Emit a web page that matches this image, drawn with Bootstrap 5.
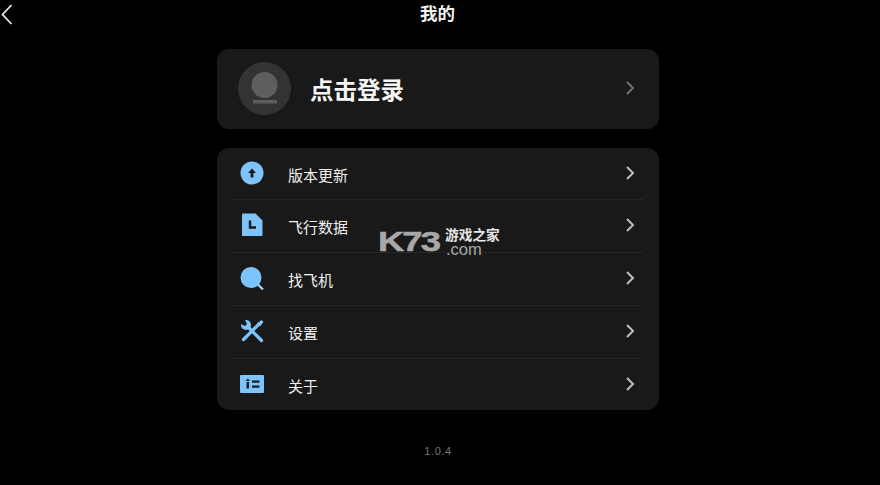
<!DOCTYPE html>
<html lang="zh">
<head>
<meta charset="utf-8">
<title>我的</title>
<link href="https://cdn.jsdelivr.net/npm/bootstrap@5.3.0/dist/css/bootstrap.min.css" rel="stylesheet">
<style>
html,body{height:485px;overflow:hidden;background:#000;}
body{font-family:"Liberation Sans","Noto Sans CJK SC",sans-serif;color:#fff;}
.screen{width:880px;height:485px;position:relative;}
.topbar{height:49px;position:relative;}
.topbar-title{font-size:17.5px;font-weight:700;line-height:28px;color:#f2f2f2;width:875px;}
.back-arrow{position:absolute;left:0;top:2px;}
.column{width:442px;margin-left:217px;}
.panel{background:#191919;border-radius:12px;}
.login-panel{height:80px;padding:0 21px;margin-bottom:19px;}
.avatar-disc{width:53px;height:53px;border-radius:50%;background:#333;flex:none;margin-top:-1px;}
.login-text{font-size:23.5px;font-weight:700;margin-left:19px;line-height:32px;color:#f5f5f5;margin-top:4px;}
.menu-panel{height:262px;padding:0 16px;}
.menu-row{height:53px;border-bottom:1px solid #262626;padding:0 1px 0 7px;}
.menu-row:first-child{height:52px;}
.menu-row:last-child{height:51px;border-bottom:0;}
.icon-slot{width:24px;height:24px;flex:none;margin-top:-2px;}
.menu-text{font-size:15px;margin-left:24px;line-height:20px;color:#f0f0f0;margin-top:4px;}
.chev{flex:none;margin-top:-2px;margin-right:6px;}
.chev-dim{margin-right:2px;}
.version{font-size:11px;letter-spacing:.6px;color:#777;margin-top:34px;line-height:14px;}
.wm{position:absolute;left:378px;top:226px;width:126px;height:30px;color:#fff;}
.wm-k{position:absolute;left:0;top:0;font-size:28px;font-weight:700;line-height:32px;color:#a8a8a8;transform:scaleX(1.3);transform-origin:left center;letter-spacing:-1.5px;-webkit-text-stroke:.5px #a8a8a8;}
.wm-a{position:absolute;left:67px;top:3px;font-size:13.7px;line-height:14px;font-weight:700;color:#e8e8e8;white-space:nowrap;}
.wm-b{position:absolute;left:68px;top:17px;font-size:16.5px;line-height:12px;color:#a8a8a8;white-space:nowrap;}
</style>
</head>
<body>
<div class="screen">
  <div class="topbar text-center">
    <svg class="back-arrow" width="14" height="24" viewBox="0 0 14 24" fill="none"><path d="M11.500 3 2.500 12.500 11.500 22" stroke="#e6e6e6" stroke-width="1.800"/></svg>
    <div class="topbar-title">我的</div>
  </div>
  <div class="column">
    <div class="panel login-panel d-flex align-items-center">
      <div class="avatar-disc d-flex align-items-center justify-content-center">
        <svg width="53" height="53" viewBox="0 0 53 53"><circle cx="26.500" cy="23" r="13" fill="#5e5e5e"/><rect x="15" y="38" width="24" height="3.500" fill="#5e5e5e"/></svg>
      </div>
      <div class="login-text flex-grow-1">点击登录</div>
      <svg class="chev chev-dim" width="12" height="16" viewBox="0 0 12 16" fill="none"><path d="M3 2l6 6-6 6" stroke="#707070" stroke-width="2"/></svg>
    </div>
    <div class="panel menu-panel">
      <div class="menu-row d-flex align-items-center">
        <svg class="icon-slot" viewBox="0 0 24 24"><circle cx="12" cy="12" r="11.500" fill="#7cc4fb"/><path d="M12 7.500 16 12h-2.600v4.500h-2.800V12H8z" fill="#1a1a1a"/></svg>
        <div class="menu-text flex-grow-1">版本更新</div>
        <svg class="chev" width="12" height="16" viewBox="0 0 12 16" fill="none"><path d="M3 2l6 6-6 6" stroke="#bdbdbd" stroke-width="2"/></svg>
      </div>
      <div class="menu-row d-flex align-items-center">
        <svg class="icon-slot" viewBox="0 0 24 24"><path d="M3 0.500h12.500L22.500 7.500V22a1 1 0 0 1-1 1H3a1 1 0 0 1-1-1V1.500a1 1 0 0 1 1-1z" fill="#7cc4fb"/><path d="M10 7.500v7h6" fill="none" stroke="#1a1a1a" stroke-width="2.400"/></svg>
        <div class="menu-text flex-grow-1">飞行数据</div>
        <svg class="chev" width="12" height="16" viewBox="0 0 12 16" fill="none"><path d="M3 2l6 6-6 6" stroke="#bdbdbd" stroke-width="2"/></svg>
      </div>
      <div class="menu-row d-flex align-items-center">
        <svg class="icon-slot" viewBox="0 0 24 24"><circle cx="11" cy="11.500" r="10.500" fill="#7cc4fb"/><path d="M18 18.500l5 5" stroke="#a8d8fc" stroke-width="2.200"/></svg>
        <div class="menu-text flex-grow-1">找飞机</div>
        <svg class="chev" width="12" height="16" viewBox="0 0 12 16" fill="none"><path d="M3 2l6 6-6 6" stroke="#bdbdbd" stroke-width="2"/></svg>
      </div>
      <div class="menu-row d-flex align-items-center">
        <svg class="icon-slot" viewBox="0 0 24 24" fill="none"><path d="M7 7l14.500 14.500" stroke="#7cc4fb" stroke-width="3.200" stroke-linecap="round"/><circle cx="6" cy="6" r="5" fill="#7cc4fb"/><path d="M4.500 0 7 5 5 7 0 4.500V0z" fill="#191919"/><path d="M19 5 3.500 20.500" stroke="#7cc4fb" stroke-width="3.200" stroke-linecap="round"/><path d="M17 4.500 21.500 1 23.500 3 20 7.500z" fill="#7cc4fb"/></svg>
        <div class="menu-text flex-grow-1">设置</div>
        <svg class="chev" width="12" height="16" viewBox="0 0 12 16" fill="none"><path d="M3 2l6 6-6 6" stroke="#bdbdbd" stroke-width="2"/></svg>
      </div>
      <div class="menu-row d-flex align-items-center">
        <svg class="icon-slot" viewBox="0 0 24 24"><rect x="0" y="3" width="24" height="18" rx="1" fill="#7cc4fb"/><rect x="6.500" y="10" width="2.500" height="6.500" fill="#1a1a1a"/><path d="M7.800 6.500 10 9H5.500z" fill="#1a1a1a"/><rect x="12" y="8.500" width="7.500" height="2.200" fill="#1a1a1a"/><rect x="12" y="13.500" width="7.500" height="2.200" fill="#1a1a1a"/></svg>
        <div class="menu-text flex-grow-1">关于</div>
        <svg class="chev" width="12" height="16" viewBox="0 0 12 16" fill="none"><path d="M3 2l6 6-6 6" stroke="#bdbdbd" stroke-width="2"/></svg>
      </div>
    </div>
    <div class="version text-center">1.0.4</div>
  </div>
  <div class="wm">
    <div class="wm-k">K73</div>
    <div class="wm-a">游戏之家</div>
    <div class="wm-b">.com</div>
  </div>
</div>
</body>
</html>
